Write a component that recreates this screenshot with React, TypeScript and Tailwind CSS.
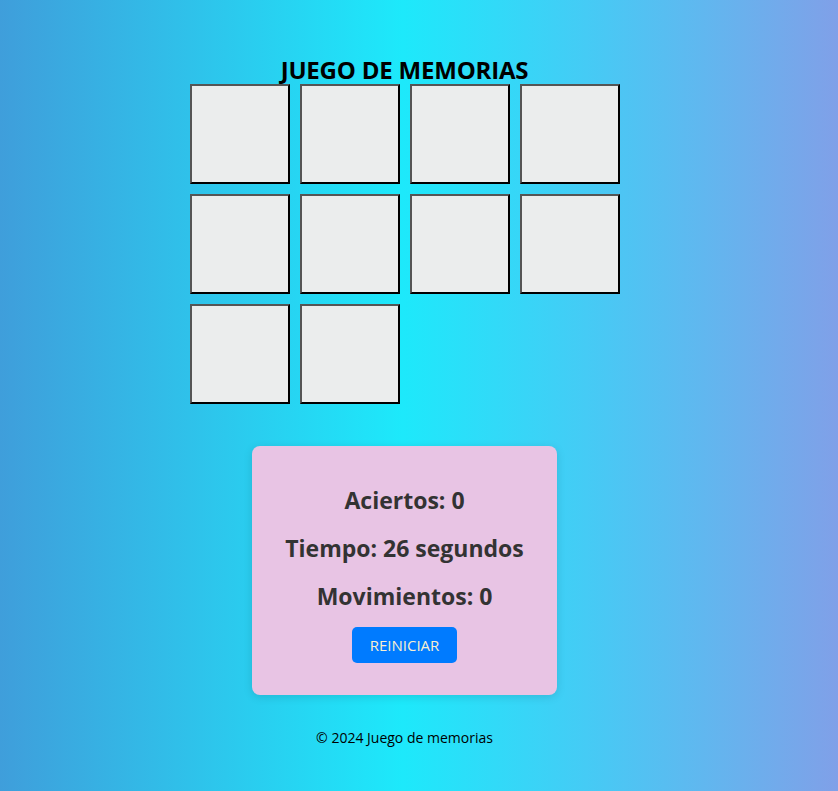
import React from 'react';

// ============================================================
// MEMORY GAME — board, score panel and footer
// ============================================================

const font = { fontFamily: '"Open Sans", "Noto Sans", sans-serif' };

function Card() {
  return (
    <div className="h-[100px] w-[100px] border-2 border-t-[#555] border-l-[#555] border-b-black border-r-black bg-[#ebeded]" />
  );
}

export default function App() {
  const cards = Array.from({ length: 10 });

  return (
    <div
      className="min-h-[791px] w-full bg-[linear-gradient(90deg,#3f9edb_0%,#1de9fb_48%,#45cbf5_70%,#80a0e8_100%)] text-black"
      style={font}
    >
      <div className="flex w-[809px] flex-col items-center pt-[55px]">
        <h1 className="text-[24px] font-bold leading-[29px] tracking-[-0.2px]">JUEGO DE MEMORIAS</h1>

        <div className="grid grid-cols-[repeat(4,100px)] gap-[10px]">
          {cards.map((_, i) => (
            <Card key={i} />
          ))}
        </div>

        <div className="mt-[42px] flex h-[249px] w-[305px] flex-col items-center rounded-lg bg-[#e8c4e4] pt-[39px] shadow-[0_2px_10px_rgba(0,0,0,0.12)]">
          <p className="text-[23px] font-bold leading-[30px] text-[#333]">Aciertos: 0</p>
          <p className="mt-[18px] text-[23px] font-bold leading-[30px] text-[#333]">Tiempo: 26 segundos</p>
          <p className="mt-[18px] text-[23px] font-bold leading-[30px] text-[#333]">Movimientos: 0</p>
          <button className="mt-[16px] h-[36px] w-[105px] rounded-[5px] bg-[#007bff] text-[15px] text-[#f8efcf]">
            REINICIAR
          </button>
        </div>

        <footer className="mt-[33px] text-[14px] leading-[20px]">© 2024 Juego de memorias</footer>
      </div>
    </div>
  );
}
